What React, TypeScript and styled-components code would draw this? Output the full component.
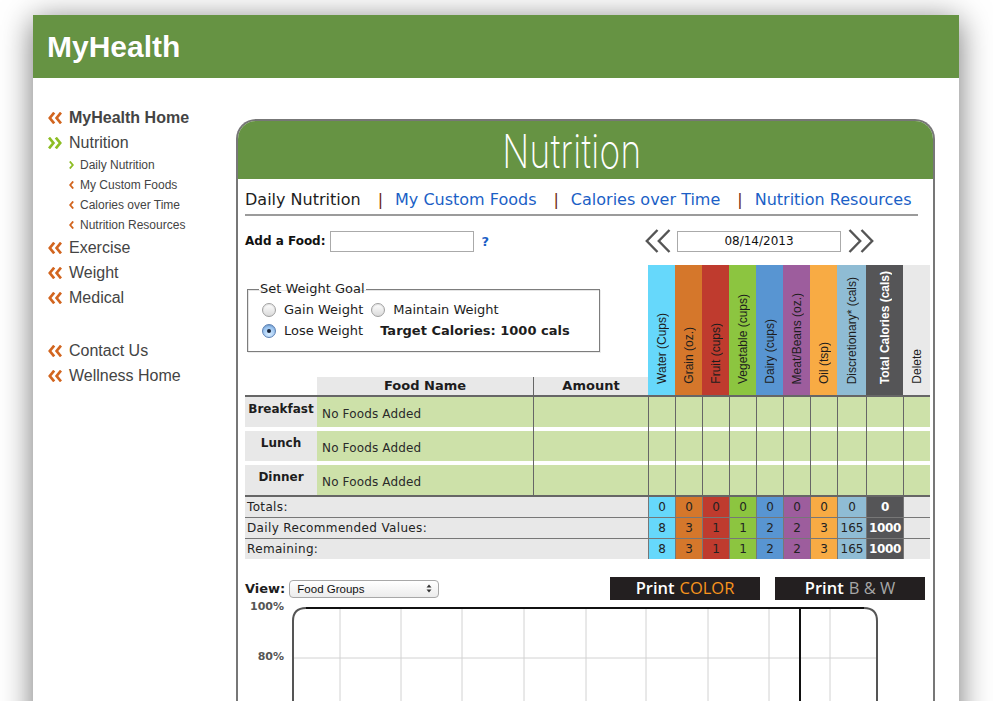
import React from 'react';
import styled, { createGlobalStyle } from 'styled-components';

const Global = createGlobalStyle`
  html, body { margin: 0; padding: 0; background: #fff; overflow: hidden; }
  * { box-sizing: border-box; }
`;

const Page = styled.div`
  width: 993px;
  height: 701px;
  padding: 15px 0 0 33px;
  overflow: hidden;
`;

const Shell = styled.div`
  width: 926px;
  height: 760px;
  background: #fff;
  box-shadow: 0 5px 30px rgba(0, 0, 0, 0.55);
`;

const TopBar = styled.header`
  height: 63px;
  background: #669343;
  padding-left: 14px;
  display: flex;
  align-items: center;
`;

const Logo = styled.h1`
  margin: 0;
  font: bold 30px/63px "Liberation Sans", Arial, sans-serif;
  color: #fff;
  letter-spacing: 0;
  text-shadow: 0 0 1px rgba(0, 0, 0, 0.2);
`;

const Body = styled.div`
  display: flex;
  align-items: flex-start;
`;

const Side = styled.nav`
  width: 203px;
  flex: none;
  padding: 27px 0 0 15px;
  font-family: "Liberation Sans", Arial, sans-serif;
  color: #444;
`;

const NavItem = styled.div<{ $bold?: boolean; $gap?: boolean }>`
  display: flex;
  align-items: center;
  height: 25px;
  font-size: 16px;
  font-weight: ${p => (p.$bold ? 700 : 400)};
  margin-top: ${p => (p.$gap ? 28 : 0)}px;
`;

const SubItem = styled.div`
  display: flex;
  align-items: center;
  height: 20px;
  padding-left: 20px;
  font-size: 12px;
`;

const MainMark = styled.span`
  width: 21px;
  flex: none;
  display: flex;
  align-items: center;
`;

const SubMark = styled.span`
  width: 12px;
  flex: none;
  display: flex;
  align-items: center;
  padding-left: 1px;
`;

const ORANGE = '#d2651f';
const LIME = '#8dbd24';

const Double = ({ color, right }: { color: string; right?: boolean }) => (
  <svg width="14" height="12" viewBox="0 0 14 12" style={{ transform: right ? 'scaleX(-1)' : undefined }}>
    <polyline points="6.2,0.6 1.8,6 6.2,11.4" fill="none" stroke={color} strokeWidth="2.7" />
    <polyline points="13,0.6 8.6,6 13,11.4" fill="none" stroke={color} strokeWidth="2.7" />
  </svg>
);

const Single = ({ color, right }: { color: string; right?: boolean }) => (
  <svg width="5" height="8" viewBox="0 0 5 8" style={{ transform: right ? 'scaleX(-1)' : undefined }}>
    <polyline points="4.2,0.5 1.2,4 4.2,7.5" fill="none" stroke={color} strokeWidth="1.9" />
  </svg>
);

const Panel = styled.main`
  width: 699px;
  height: 640px;
  margin-top: 41px;
  border: 2px solid #777;
  border-bottom: none;
  border-radius: 20px 20px 0 0;
`;

const PanelHead = styled.div`
  height: 58px;
  background: #669343;
  border-radius: 18px 18px 0 0;
  display: flex;
  align-items: center;
  justify-content: center;
  padding-right: 27px;
  overflow: hidden;
`;

const Title = styled.h2`
  margin: 0;
  display: inline-block;
  font: 200 47px/1 Inter, "DejaVu Sans", sans-serif;
  color: #fff;
  transform: scaleX(0.75);
  letter-spacing: 0.5px;
`;

const Content = styled.div`
  padding: 0 3px 0 7px;
  font-family: "DejaVu Sans", Verdana, sans-serif;
  color: #222;
`;

const Tabs = styled.div`
  margin: 11px 12px 0 0;
  padding-bottom: 4px;
  border-bottom: 2px solid #9b9b9b;
  font-size: 16px;
  line-height: 20px;
  display: flex;
  align-items: center;
  white-space: nowrap;
`;

const Tab = styled.a<{ $active?: boolean }>`
  color: ${p => (p.$active ? '#1d1d1d' : '#1b5fc6')};
  text-decoration: none;
`;

const Sep = styled.span`
  color: #6a1d10;
  margin: 0 12px 0 17px;
`;

const ToolRow = styled.div`
  display: flex;
  align-items: center;
  height: 24px;
  margin-top: 13px;
`;

const AddFood = styled.label`
  width: 400px;
  display: flex;
  align-items: center;
  font-weight: bold;
  font-size: 12px;
  color: #111;
`;

const FoodInput = styled.input`
  width: 144px;
  height: 21px;
  margin: 0 0 0 4px;
  border: 1px solid #aaa;
  outline: none;
`;

const Help = styled.span`
  margin-left: 8px;
  color: #1b5fc6;
  font-size: 13px;
`;

const DateNav = styled.div`
  display: flex;
  align-items: center;
  gap: 6px;
`;

const DateBox = styled.div`
  width: 164px;
  height: 21px;
  border: 1px solid #aaa;
  font-size: 12px;
  line-height: 19px;
  text-align: center;
  color: #111;
  margin-right: 1px;
`;

const Arrows = ({ right }: { right?: boolean }) => (
  <svg width="26" height="24" viewBox="0 0 26 24" style={{ transform: right ? 'scaleX(-1)' : undefined }}>
    <polyline points="12.5,1 1.8,12 12.5,23" fill="none" stroke="#555" strokeWidth="2.4" />
    <polyline points="24.5,1 13.8,12 24.5,23" fill="none" stroke="#555" strokeWidth="2.4" />
  </svg>
);

const COLS = '403px repeat(7, 27px) 29px 37px 27px';
const MEAL_COLS = '72px 216px 115px repeat(7, 27px) 29px 37px 27px';

const HeadGrid = styled.div`
  display: grid;
  grid-template-columns: ${COLS};
  height: 130px;
  margin-top: 12px;
`;

const HeadLeft = styled.div`
  display: flex;
  flex-direction: column;
`;

const Goal = styled.fieldset`
  width: 353px;
  margin: 16px 0 0 2px;
  padding: 2px 10px 10px 14px;
  border: 1px solid #7d7d7d;
  box-shadow: inset 1px 1px 0 #e4e4e4, 1px 1px 0 #ececec;
  font-size: 13px;
  color: #1d1d1d;
`;

const Legend = styled.legend`
  padding: 0 1px;
  margin-left: -3px;
  line-height: 16px;
`;

const GoalRow = styled.div`
  display: flex;
  align-items: center;
  height: 21px;
  white-space: nowrap;
`;

const Radio = styled.span<{ $on?: boolean; $lead?: number }>`
  width: 14px;
  height: 14px;
  flex: none;
  margin-left: ${p => p.$lead ?? 0}px;
  border-radius: 50%;
  display: inline-flex;
  align-items: center;
  justify-content: center;
  border: 1px solid ${p => (p.$on ? '#5b7fb3' : '#a0a0a0')};
  background: ${p =>
    p.$on
      ? 'radial-gradient(circle at 50% 75%, #d8ecff 0%, #93bfee 70%, #6d9fd8 100%)'
      : 'linear-gradient(#ffffff, #dadada)'};
  box-shadow: inset 0 1px 1px rgba(0, 0, 0, 0.12);
  &::after {
    content: '';
    width: 4px;
    height: 4px;
    border-radius: 50%;
    background: #17243a;
    display: ${p => (p.$on ? 'block' : 'none')};
  }
`;

const RadioText = styled.span`
  margin-left: 8px;
`;

const Target = styled.span`
  margin-left: 17px;
  font-weight: bold;
`;

const SubHead = styled.div`
  margin-top: auto;
  display: grid;
  grid-template-columns: 72px 216px 115px;
  height: 18px;
  font-size: 13px;
  font-weight: bold;
  line-height: 18px;
  color: #1d1d1d;
`;

const SubHeadCell = styled.div<{ $line?: boolean; $blank?: boolean }>`
  background: ${p => (p.$blank ? 'transparent' : '#e8e8e8')};
  text-align: center;
  border-left: ${p => (p.$line ? '1px solid #666' : 'none')};
`;

const ColHead = styled.div<{ $bg: string; $fg?: string; $bold?: boolean }>`
  background: ${p => p.$bg};
  color: ${p => p.$fg ?? '#1d1d1d'};
  display: flex;
  align-items: flex-end;
  justify-content: center;
  padding-bottom: 11px;
  font: ${p => (p.$bold ? 'bold' : 'normal')} 12px/14px "Liberation Sans", Arial, sans-serif;
`;

const VText = styled.span`
  writing-mode: vertical-rl;
  transform: rotate(180deg);
  white-space: nowrap;
`;

const MealBlock = styled.div`
  border-top: 2px solid #666;
  border-bottom: 2px solid #666;
`;

const MealRow = styled.div<{ $gap?: boolean }>`
  display: grid;
  grid-template-columns: ${MEAL_COLS};
  height: ${p => (p.$gap ? 4 : 30)}px;
`;

const MealLabel = styled.div`
  background: #e8e8e8;
  text-align: center;
  font-weight: bold;
  font-size: 12px;
  line-height: 16px;
  padding-top: 4px;
  color: #1d1d1d;
`;

const MealCell = styled.div<{ $line?: boolean; $gap?: boolean }>`
  background: ${p => (p.$gap ? '#fff' : '#cde1a9')};
  border-left: ${p => (p.$line ? '1px solid #666' : 'none')};
  font-size: 12px;
  line-height: 16px;
  padding: 9px 0 0 5px;
  color: #2a2a2a;
  white-space: nowrap;
  letter-spacing: 0.15px;
`;

const SumRow = styled.div<{ $last?: boolean }>`
  display: grid;
  grid-template-columns: ${COLS};
  height: ${p => (p.$last ? 20 : 21)}px;
  border-bottom: ${p => (p.$last ? 'none' : '1px solid #777')};
  font-size: 12px;
  line-height: 20px;
`;

const SumLabel = styled.div`
  background: #e8e8e8;
  padding-left: 2px;
  color: #222;
  letter-spacing: 0.35px;
`;

const SumCell = styled.div<{ $bg: string; $fg?: string; $bold?: boolean }>`
  background: ${p => p.$bg};
  color: ${p => p.$fg ?? '#222'};
  font-weight: ${p => (p.$bold ? 'bold' : 'normal')};
  border-left: 1px solid #777;
  text-align: center;
  white-space: nowrap;
  letter-spacing: ${p => (p.$bold ? '-0.3px' : '0')};
`;

const ViewRow = styled.div`
  display: flex;
  align-items: center;
  height: 23px;
  margin-top: 18px;
  padding-right: 5px;
`;

const ViewLabel = styled.span`
  font-weight: bold;
  font-size: 13px;
  color: #1d1d1d;
`;

const Select = styled.div`
  width: 150px;
  height: 18px;
  margin-left: 4px;
  border: 1px solid #a8a8a8;
  border-radius: 4px;
  background: linear-gradient(#ffffff, #ececec);
  display: flex;
  align-items: center;
  justify-content: space-between;
  padding: 0 6px 0 7px;
  font: 11.5px "Liberation Sans", Arial, sans-serif;
  color: #111;
`;

const PrintButtons = styled.div`
  margin-left: auto;
  display: flex;
  gap: 15px;
`;

const PrintBtn = styled.div`
  width: 150px;
  height: 23px;
  background: #231f20;
  display: flex;
  align-items: center;
  justify-content: center;
  gap: 5px;
  font: 600 16.5px/1 "Open Sans", "DejaVu Sans", sans-serif;
  color: #fff;
`;

const PrintAccent = styled.span<{ $c: string }>`
  color: ${p => p.$c};
  font-weight: 400;
`;

const ChartRow = styled.div`
  display: flex;
  margin-top: 6px;
`;

const Axis = styled.div`
  width: 46px;
  flex: none;
  margin-top: -6px;
  display: flex;
  flex-direction: column;
  align-items: flex-end;
  gap: 36px;
  padding-right: 7px;
  font-weight: bold;
  font-size: 11px;
  line-height: 14px;
  color: #555;
`;

const cols = [
  { name: 'Water (Cups)', bg: '#66d8fb' },
  { name: 'Grain (oz.)', bg: '#d5772b' },
  { name: 'Fruit (cups)', bg: '#bf3b2e' },
  { name: 'Vegetable (cups)', bg: '#8cc540' },
  { name: 'Dairy (cups)', bg: '#5895d2' },
  { name: 'Meat/Beans (oz.)', bg: '#9d5d9d' },
  { name: 'Oil (tsp)', bg: '#f8ab44' },
  { name: 'Discretionary* (cals)', bg: '#8fbcd4' },
  { name: 'Total Calories (cals)', bg: '#555557', fg: '#fff', bold: true },
  { name: 'Delete', bg: '#e9e9e9' },
];

const sums = [
  { label: 'Totals:', vals: ['0', '0', '0', '0', '0', '0', '0', '0', '0'] },
  { label: 'Daily Recommended Values:', vals: ['8', '3', '1', '1', '2', '2', '3', '165', '1000'] },
  { label: 'Remaining:', vals: ['8', '3', '1', '1', '2', '2', '3', '165', '1000'] },
];

const meals = ['Breakfast', 'Lunch', 'Dinner'];

const gridX = [49, 110, 171, 233, 295, 355, 417, 478, 539];

const Chart = () => (
  <svg width="592" height="100" viewBox="0 0 592 100">
    {gridX.map(x => (
      <line key={x} x1={x} y1={3} x2={x} y2={100} stroke="#d2d2d2" strokeWidth="1" />
    ))}
    <line x1={3} y1={52} x2={586} y2={52} stroke="#d2d2d2" strokeWidth="1" />
    <path d="M2 100 V15 Q2 2 15 2 H573 Q586 2 586 15 V100" fill="none" stroke="#555" strokeWidth="2" />
    <line x1={15} y1={2} x2={573} y2={2} stroke="#111" strokeWidth="2" />
    <line x1={509} y1={2} x2={509} y2={100} stroke="#111" strokeWidth="2" />
  </svg>
);

const UpDown = () => (
  <svg width="6" height="9" viewBox="0 0 6 9">
    <polygon points="3,0.5 5.5,3.5 0.5,3.5" fill="#333" />
    <polygon points="3,8.5 5.5,5.5 0.5,5.5" fill="#333" />
  </svg>
);

export default function App() {
  return (
    <Page>
      <Global />
      <Shell>
        <TopBar>
          <Logo>MyHealth</Logo>
        </TopBar>
        <Body>
          <Side>
            <NavItem $bold>
              <MainMark><Double color={ORANGE} /></MainMark>MyHealth Home
            </NavItem>
            <NavItem>
              <MainMark><Double color={LIME} right /></MainMark>Nutrition
            </NavItem>
            <SubItem>
              <SubMark><Single color={LIME} right /></SubMark>Daily Nutrition
            </SubItem>
            <SubItem>
              <SubMark><Single color={ORANGE} /></SubMark>My Custom Foods
            </SubItem>
            <SubItem>
              <SubMark><Single color={ORANGE} /></SubMark>Calories over Time
            </SubItem>
            <SubItem>
              <SubMark><Single color={ORANGE} /></SubMark>Nutrition Resources
            </SubItem>
            <NavItem>
              <MainMark><Double color={ORANGE} /></MainMark>Exercise
            </NavItem>
            <NavItem>
              <MainMark><Double color={ORANGE} /></MainMark>Weight
            </NavItem>
            <NavItem>
              <MainMark><Double color={ORANGE} /></MainMark>Medical
            </NavItem>
            <NavItem $gap>
              <MainMark><Double color={ORANGE} /></MainMark>Contact Us
            </NavItem>
            <NavItem>
              <MainMark><Double color={ORANGE} /></MainMark>Wellness Home
            </NavItem>
          </Side>

          <Panel>
            <PanelHead>
              <Title>Nutrition</Title>
            </PanelHead>
            <Content>
              <Tabs>
                <Tab $active>Daily Nutrition</Tab>
                <Sep>|</Sep>
                <Tab>My Custom Foods</Tab>
                <Sep>|</Sep>
                <Tab>Calories over Time</Tab>
                <Sep>|</Sep>
                <Tab>Nutrition Resources</Tab>
              </Tabs>

              <ToolRow>
                <AddFood>
                  Add a Food:
                  <FoodInput />
                  <Help>?</Help>
                </AddFood>
                <DateNav>
                  <Arrows />
                  <DateBox>08/14/2013</DateBox>
                  <Arrows right />
                </DateNav>
              </ToolRow>

              <HeadGrid>
                <HeadLeft>
                  <Goal>
                    <Legend>Set Weight Goal</Legend>
                    <GoalRow>
                      <Radio />
                      <RadioText>Gain Weight</RadioText>
                      <Radio $lead={8} />
                      <RadioText>Maintain Weight</RadioText>
                    </GoalRow>
                    <GoalRow>
                      <Radio $on />
                      <RadioText>Lose Weight</RadioText>
                      <Target>Target Calories: 1000 cals</Target>
                    </GoalRow>
                  </Goal>
                  <SubHead>
                    <SubHeadCell $blank />
                    <SubHeadCell>Food Name</SubHeadCell>
                    <SubHeadCell $line>Amount</SubHeadCell>
                  </SubHead>
                </HeadLeft>
                {cols.map(c => (
                  <ColHead key={c.name} $bg={c.bg} $fg={c.fg} $bold={c.bold}>
                    <VText>{c.name}</VText>
                  </ColHead>
                ))}
              </HeadGrid>

              <MealBlock>
                {meals.map((m, i) => (
                  <React.Fragment key={m}>
                    {i > 0 && (
                      <MealRow $gap>
                        <MealCell $gap />
                        <MealCell $gap />
                        {Array.from({ length: 11 }).map((_, k) => (
                          <MealCell key={k} $gap $line />
                        ))}
                      </MealRow>
                    )}
                    <MealRow>
                      <MealLabel>{m}</MealLabel>
                      <MealCell>No Foods Added</MealCell>
                      {Array.from({ length: 11 }).map((_, k) => (
                        <MealCell key={k} $line />
                      ))}
                    </MealRow>
                  </React.Fragment>
                ))}
              </MealBlock>

              {sums.map((r, i) => (
                <SumRow key={r.label} $last={i === sums.length - 1}>
                  <SumLabel>{r.label}</SumLabel>
                  {r.vals.map((v, k) => (
                    <SumCell
                      key={k}
                      $bg={cols[k].bg}
                      $fg={cols[k].fg}
                      $bold={cols[k].bold}
                    >
                      {v}
                    </SumCell>
                  ))}
                  <SumCell $bg="#e8e8e8" />
                </SumRow>
              ))}

              <ViewRow>
                <ViewLabel>View:</ViewLabel>
                <Select>
                  <span>Food Groups</span>
                  <UpDown />
                </Select>
                <PrintButtons>
                  <PrintBtn>
                    Print <PrintAccent $c="#f7941d">COLOR</PrintAccent>
                  </PrintBtn>
                  <PrintBtn>
                    Print <PrintAccent $c="#a7a7a7">B &amp; W</PrintAccent>
                  </PrintBtn>
                </PrintButtons>
              </ViewRow>

              <ChartRow>
                <Axis>
                  <span>100%</span>
                  <span>80%</span>
                </Axis>
                <Chart />
              </ChartRow>
            </Content>
          </Panel>
        </Body>
      </Shell>
    </Page>
  );
}
